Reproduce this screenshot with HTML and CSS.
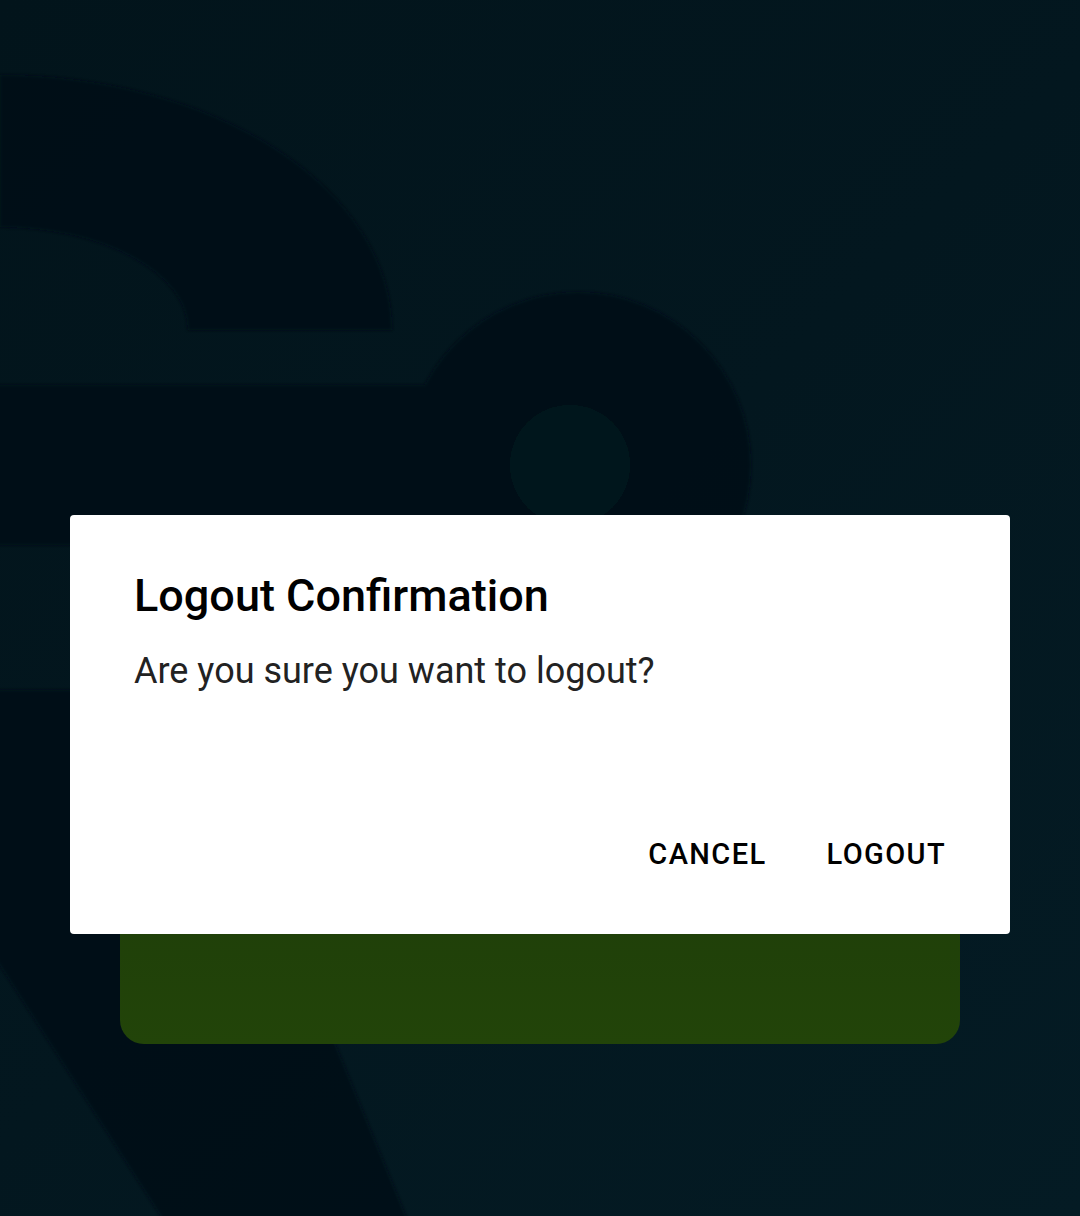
FILE: index.html
```html
<!DOCTYPE html>
<html>
<head>
	<meta charset="UTF-8">
	<meta name="viewport" content="width=device-width, initial-scale=1">
	<title>Logout Confirmation</title>
	<link rel="stylesheet" href="styles.css">
</head>
<body>

	<div class="screen">
		<!-- decorative backdrop shapes -->
		<svg class="backdrop" viewBox="0 0 1080 1216" width="1080" height="1216">
			<defs>
				<filter id="soft" x="-5%" y="-5%" width="110%" height="110%">
					<feGaussianBlur stdDeviation="1.5"/>
				</filter>
			</defs>
			<g class="shapes" filter="url(#soft)">
				<path class="shape" d="M0,75 A392,255 0 0 1 392,330 L188,330 A188,103 0 0 0 0,227 Z"/>
				<rect class="shape" x="-10" y="385" width="450" height="160"/>
				<circle class="shape" cx="578" cy="465" r="173"/>
				<circle class="hole" cx="570" cy="465" r="60"/>
				<polygon class="shape" points="-10,690 190,690 410,1226 167,1226 -10,950"/>
			</g>
		</svg>

		<div class="content">
			<div class="card"></div>
		</div>

		<!-- Dialog -->
		<div class="overlay">
			<div class="dialog">
				<h2 class="dialog-title">Logout Confirmation</h2>
				<p class="dialog-message">Are you sure you want to logout?</p>
				<div class="dialog-actions">
					<button class="btn">CANCEL</button>
					<button class="btn">LOGOUT</button>
				</div>
			</div>
		</div>
	</div>

</body>
</html>
```

FILE: styles.css
```css
body {
	margin: 0;
	padding: 0;
	overflow: hidden;
	background-color: #03171f;
	font-family: 'Roboto', 'Noto Sans', sans-serif;
}
.screen {
	position: relative;
	width: 1080px;
	height: 1216px;
	overflow: hidden;
	background: linear-gradient(135deg, #02141b 0%, #03171f 50%, #041b24 100%);
}
.backdrop {
	position: absolute;
	top: 0;
	left: 0;
}
.backdrop .shapes {
	opacity: 0.8;
}
.backdrop .shape {
	fill: #020f15;
}
.backdrop .hole {
	fill: #03181f;
}

/* screen content behind the dialog */
.content {
	position: relative;
	padding-top: 744px;
}
.card {
	margin: 0 120px;
	height: 300px;
	border-radius: 0 0 24px 24px;
	background: linear-gradient(#1c3a09, #224409);
}

/* Dialog */
.overlay {
	position: absolute;
	top: 0;
	left: 0;
	right: 0;
	bottom: 0;
	display: flex;
	justify-content: center;
	align-items: flex-start;
	padding-top: 515px;
}
.dialog {
	width: 940px;
	box-sizing: border-box;
	background-color: #fff;
	border-radius: 4px;
	padding: 56px 64px 48px;
}
.dialog-title {
	margin: 0;
	font-size: 45px;
	line-height: 50px;
	font-weight: 500;
	color: #000;
}
.dialog-message {
	margin: 28px 0 0;
	font-size: 36px;
	line-height: 44px;
	font-weight: 400;
	color: #222;
}
.dialog-actions {
	display: flex;
	justify-content: flex-end;
	gap: 28px;
	margin: 129px -16px 0 0;
}
.btn {
	font-family: 'Roboto', 'Noto Sans', sans-serif;
	font-size: 29px;
	line-height: 32px;
	font-weight: 500;
	letter-spacing: 1.4px;
	color: #000;
	background: none;
	border: none;
	padding: 16px;
	margin: 0;
}
```
